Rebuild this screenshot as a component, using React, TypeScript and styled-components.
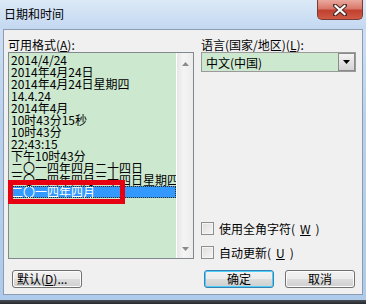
import styled, { createGlobalStyle } from 'styled-components';

const Global = createGlobalStyle`
  html, body { margin: 0; padding: 0; }
  body {
    width: 366px;
    height: 304px;
    overflow: hidden;
    font-family: "Noto Sans CJK SC", "Liberation Sans", sans-serif;
    font-size: 12px;
    color: #000;
  }
`

const Window = styled.div`
  width: 366px;
  height: 304px;
  display: flex;
  flex-direction: column;
  background: linear-gradient(#d3e3f5, #b9d1ee 40%, #aecbeb);
`

const TitleBar = styled.div`
  height: 29px;
  display: flex;
  align-items: flex-start;
  padding-left: 4px;
  background: linear-gradient(180deg, #dce9f7, #c3d8f1);
`

const Title = styled.div`
  margin-top: 7px;
  line-height: 14px;
  color: #000;
`

const CloseButton = styled.div`
  margin-left: auto;
  margin-right: 3px;
  width: 46px;
  height: 20px;
  border: 1px solid #7b3a33;
  border-top: none;
  border-radius: 0 0 5px 5px;
  background: linear-gradient(180deg, #e9a99d 0%, #d8786a 45%, #c1402f 55%, #cf5a45 100%);
  display: flex;
  align-items: center;
  justify-content: center;
  box-sizing: border-box;
`

const Client = styled.div`
  margin: 0 3px;
  height: 266px;
  box-sizing: border-box;
  border: 1px solid #8c9db2;
  background: #f0f0f0;
  padding: 8px 0 0 4px;
  display: grid;
  grid-template-columns: 186px 155px;
  grid-template-rows: 14px 207px auto;
  column-gap: 7px;
`

const Label = styled.div`
  line-height: 13px;
  white-space: nowrap;
`

const ListBox = styled.div`
  position: relative;
  display: flex;
  border: 1px solid #828790;
`

const Items = styled.div`
  flex: 1;
  min-width: 0;
  background: #cce8cf;
  padding-top: 1px;
  overflow-x: clip;
  overflow-y: visible;
`

const Row = styled.div<{ $sel?: boolean }>`
  height: 12px;
  line-height: 12px;
  padding-left: 2px;
  white-space: nowrap;
  box-sizing: border-box;
  ${p => p.$sel && `
    background: #3399ff;
    color: #fff;
    outline: 1px dotted #3a2a10;
    outline-offset: -1px;
  `}
`

const ScrollBar = styled.div`
  width: 17px;
  flex-shrink: 0;
  display: flex;
  flex-direction: column;
  justify-content: space-between;
  align-items: center;
  padding: 9px 0 7px;
  box-sizing: border-box;
  border-left: 1px solid #fff;
  background: linear-gradient(90deg, #e6e6e6, #f4f4f4 40%, #ececec);
`

const Highlight = styled.div`
  position: absolute;
  left: -1px;
  top: 127px;
  width: 117px;
  height: 24px;
  box-sizing: border-box;
  border: 5px solid #e60012;
`

const RightPane = styled.div`
  display: flex;
  flex-direction: column;
`

const Combo = styled.div`
  height: 20px;
  box-sizing: border-box;
  border: 1px solid #9a9a9a;
  background: #cce8cf;
  display: flex;
  align-items: center;
  padding-left: 4px;
`

const ComboText = styled.span`
  flex: 1;
`

const DropButton = styled.div`
  width: 17px;
  height: 18px;
  box-sizing: border-box;
  border: 1px solid #8a8a8a;
  background: linear-gradient(#f4f4f4, #e2e2e2 50%, #d4d4d4);
  display: flex;
  align-items: center;
  justify-content: center;
`

const Checks = styled.div`
  margin-top: auto;
  display: flex;
  flex-direction: column;
  gap: 11px;
`

const CheckRow = styled.label`
  display: flex;
  align-items: center;
  gap: 5px;
  height: 13px;
  line-height: 13px;
`

const Box = styled.span`
  width: 13px;
  height: 13px;
  box-sizing: border-box;
  border: 1px solid #8f8f8f;
  background: linear-gradient(135deg, #dcdcdc, #f6f6f6);
  box-shadow: inset 0 0 0 1px #f4f4f4;
`

const ButtonRow = styled.div<{ $left?: number }>`
  display: flex;
  gap: 11px;
  margin-top: 11px;
  padding-left: ${p => p.$left ?? 0}px;
`

const Button = styled.div<{ $focus?: boolean }>`
  width: 70px;
  height: 18px;
  box-sizing: border-box;
  border: 1px solid ${p => (p.$focus ? '#3c7fb1' : '#707070')};
  border-radius: 3px;
  background: linear-gradient(#f2f2f2 0%, #ebebeb 50%, #dddddd 51%, #cfcfcf 100%);
  box-shadow: inset 0 0 0 1px ${p => (p.$focus ? '#48d1ff' : '#fcfcfc')};
  display: flex;
  align-items: center;
  justify-content: center;
  line-height: 14px;
`

const LeftButton = styled(Button)`
  justify-content: flex-start;
  padding-left: 4px;
`

const BlueEdge = styled.div`
  flex: 1;
`

const TaskStrip = styled.div`
  height: 4px;
  background: linear-gradient(#4a4e55, #25282d);
`

const formats = [
  '2014/4/24',
  '2014年4月24日',
  '2014年4月24日星期四',
  '14.4.24',
  '2014年4月',
  '10时43分15秒',
  '10时43分',
  '22:43:15',
  '下午10时43分',
  '二〇一四年四月二十四日',
  '二〇一四年四月二十四日星期四',
  '二〇一四年四月',
]

const Arrow = ({ up }: { up?: boolean }) => (
  <svg width="7" height="4" viewBox="0 0 7 4">
    <path d={up ? 'M3.5 0 L7 4 L0 4 Z' : 'M0 0 L7 0 L3.5 4 Z'} fill="#8a8a8a" />
  </svg>
)

const App = () => (
  <Window>
    <Global />
    <TitleBar>
      <Title>日期和时间</Title>
      <CloseButton>
        <svg width="14" height="12" viewBox="0 0 14 12">
          <path d="M2 1.5 L12 10.5 M12 1.5 L2 10.5" stroke="#4a2a28" strokeWidth="4.2" strokeLinecap="square" />
          <path d="M2.5 2 L11.5 10 M11.5 2 L2.5 10" stroke="#fff" strokeWidth="2.2" strokeLinecap="square" />
        </svg>
      </CloseButton>
    </TitleBar>
    <Client>
      <Label>可用格式(<u>A</u>):</Label>
      <Label>语言(国家/地区)(<u>L</u>):</Label>
      <ListBox>
        <Items>
          {formats.map((f, i) => (
            <Row key={f} $sel={i === formats.length - 1}>{f}</Row>
          ))}
        </Items>
        <ScrollBar>
          <Arrow up />
          <Arrow />
        </ScrollBar>
        <Highlight />
      </ListBox>
      <RightPane>
        <Combo>
          <ComboText>中文(中国)</ComboText>
          <DropButton>
            <svg width="7" height="4" viewBox="0 0 7 4">
              <path d="M0 0 L7 0 L3.5 4 Z" fill="#000" />
            </svg>
          </DropButton>
        </Combo>
        <Checks>
          <CheckRow><Box />使用全角字符(<u>W</u>)</CheckRow>
          <CheckRow><Box />自动更新(<u>U</u>)</CheckRow>
        </Checks>
      </RightPane>
      <ButtonRow $left={4}>
        <LeftButton>默认(<u>D</u>)...</LeftButton>
      </ButtonRow>
      <ButtonRow $left={3}>
        <Button $focus>确定</Button>
        <Button>取消</Button>
      </ButtonRow>
    </Client>
    <BlueEdge />
    <TaskStrip />
  </Window>
)

export default App
